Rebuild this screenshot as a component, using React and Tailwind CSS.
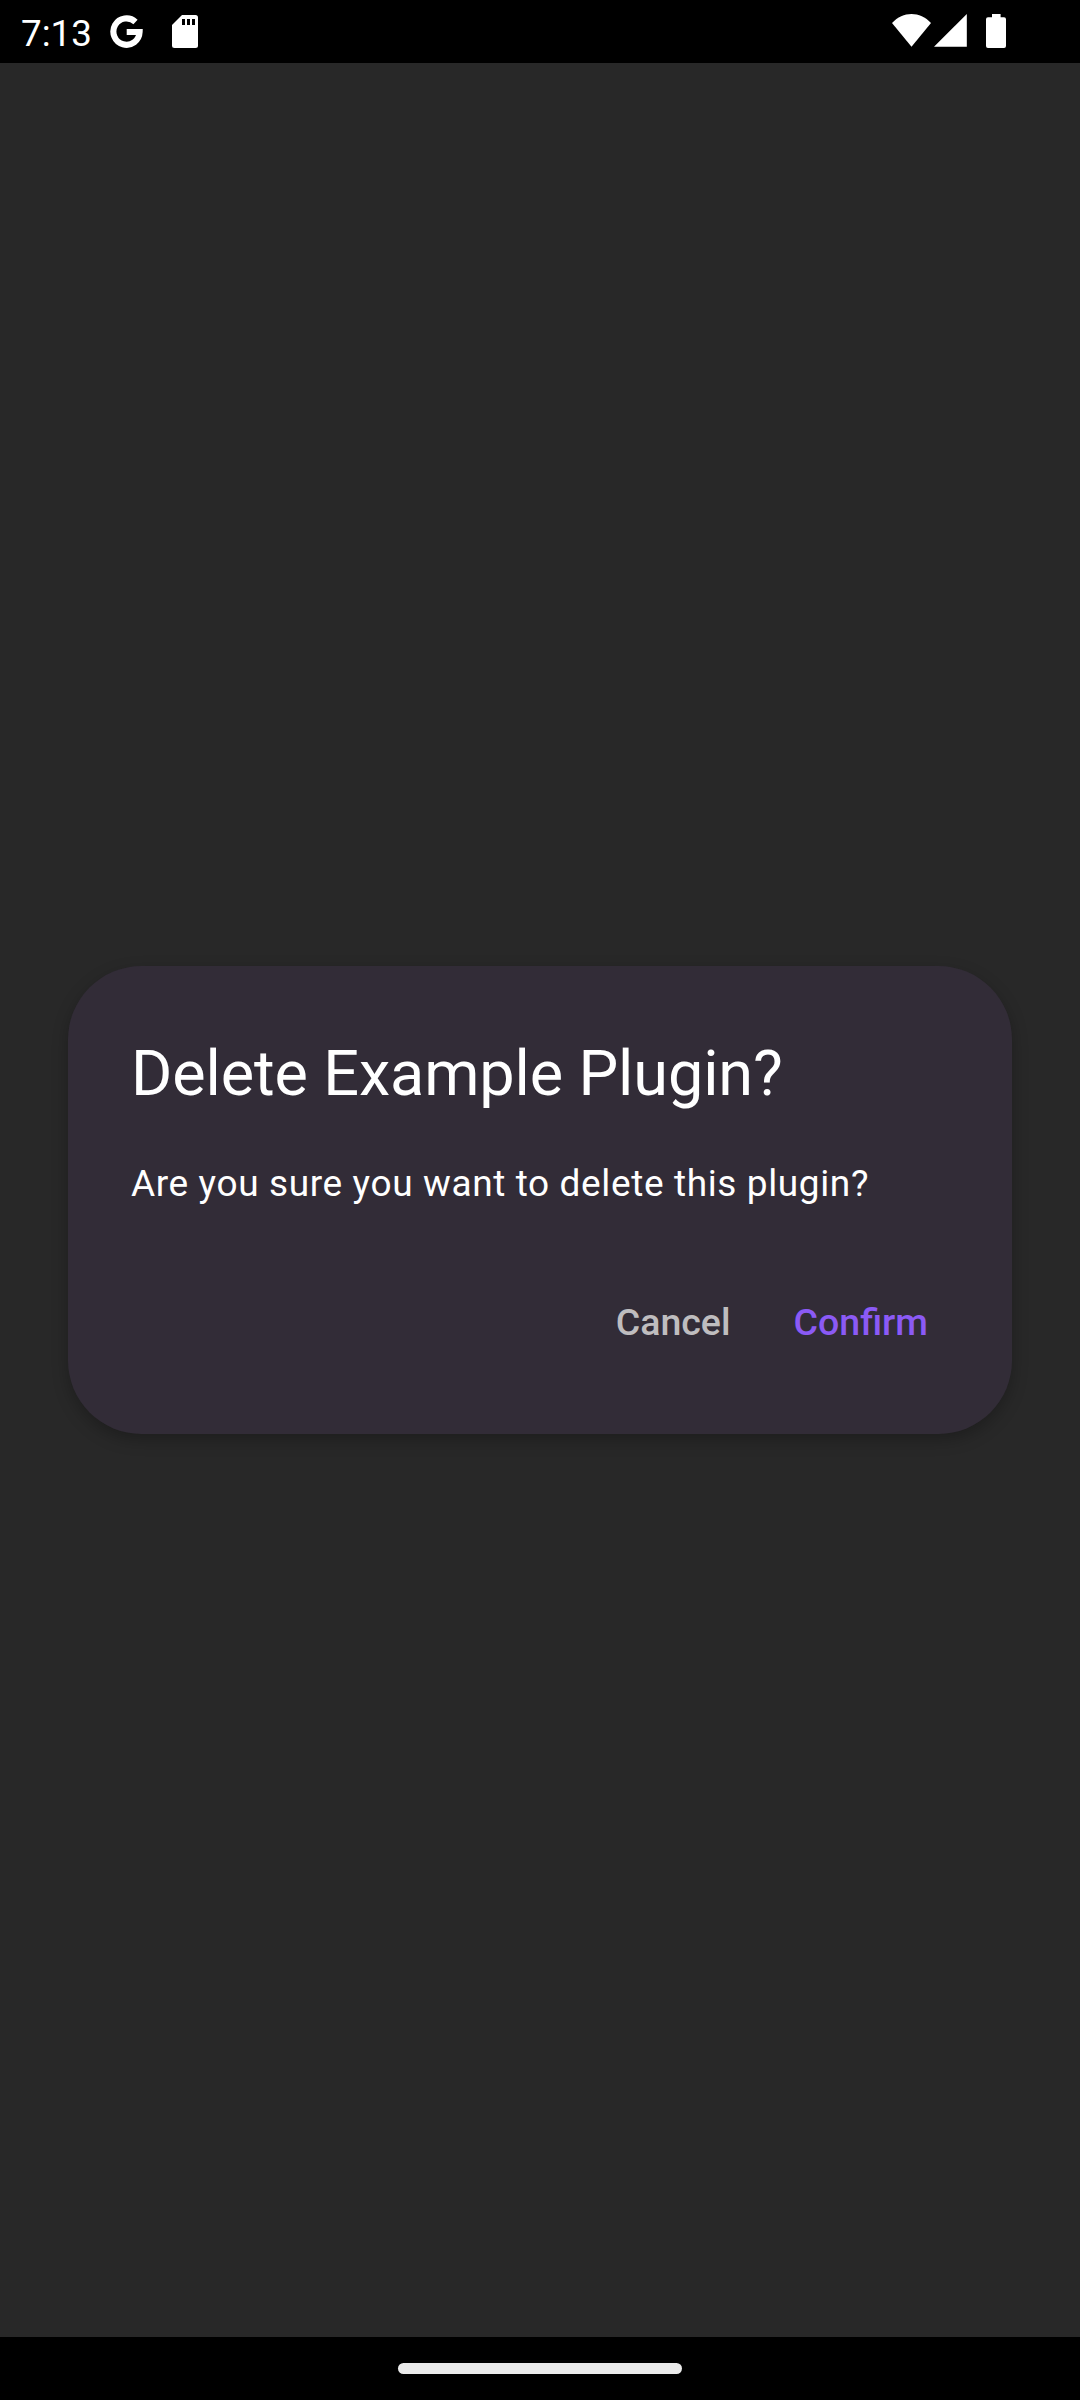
function StatusBar() {
  return (
    <header className="flex h-[63px] items-start bg-black pl-[21px] text-white">
      <time className="mt-[12px] w-[72px] text-[36.75px] leading-[43px]">7:13</time>
      <svg className="mt-[15px] ml-[17px] h-[33px] w-[33px]" viewBox="0 0 33 33" fill="none">
        <path d="M25.5 7 A13.1 13.2 0 1 0 29.6 17H16.7" stroke="white" strokeWidth="6.1" />
      </svg>
      <svg className="mt-[15px] ml-[29px] h-[33px] w-[26px]" viewBox="0 0 26 33">
        <path d="M10 0H23.5Q26 0 26 2.5V30.5Q26 33 23.5 33H2.5Q0 33 0 30.5V10Z" fill="white" />
        <path d="M10 4h3v6h-3zM15 4h3v6h-3zM20 4h3v6h-3z" fill="black" />
      </svg>
      <svg className="mt-[14px] ml-auto h-[33px] w-[39px]" viewBox="0 0 39 33" fill="white">
        <path d="M0 9C11-3 28-3 39 9L19.5 32.8Z" />
      </svg>
      <svg className="mt-[14px] ml-[3px] h-[33px] w-[33px]" viewBox="0 0 33 33" fill="white">
        <path d="M32.8 0V32.8H0Z" />
      </svg>
      <svg className="mt-[14px] mr-[74px] ml-[19px] h-[34px] w-[20px]" viewBox="0 0 20 34" fill="white">
        <path d="M6 0h8.6v3.3H18q2 0 2 2V32q0 2-2 2H2q-2 0-2-2V5.300q0-2 2-2h4z" />
      </svg>
    </header>
  );
}

function DeleteDialog() {
  return (
    <section
      role="dialog"
      aria-labelledby="dialog-title"
      className="flex h-[468px] w-[944px] flex-col rounded-[73.5px] bg-[#322c37] px-[63px] pt-[66px] text-white shadow-[0_6px_16px_rgba(0,0,0,0.25)]"
    >
      <h1 id="dialog-title" className="text-[63px] leading-[84px] tracking-[-0.13px]">Delete Example Plugin?</h1>
      <p className="mt-[42px] text-[37px] leading-[52px] tracking-[0.62px]">
        Are you sure you want to delete this plugin?
      </p>
      <div className="mt-[86px] mr-[21px] flex justify-end gap-[63px] text-[37.5px] leading-[52px] font-medium">
        <button className="text-[#bfbdbf]">Cancel</button>
        <button className="text-[#8b5af5]">Confirm</button>
      </div>
    </section>
  );
}

export default function App() {
  return (
    <div className="flex h-[2400px] w-[1080px] flex-col bg-[#282828] font-['Roboto',sans-serif]">
      <StatusBar />
      <main className="flex flex-1 items-center justify-center">
        <DeleteDialog />
      </main>
      <footer className="flex h-[63px] justify-center bg-black pt-[26px]">
        <div className="h-[11px] w-[284px] rounded-full bg-[#ebebeb]" />
      </footer>
    </div>
  );
}
